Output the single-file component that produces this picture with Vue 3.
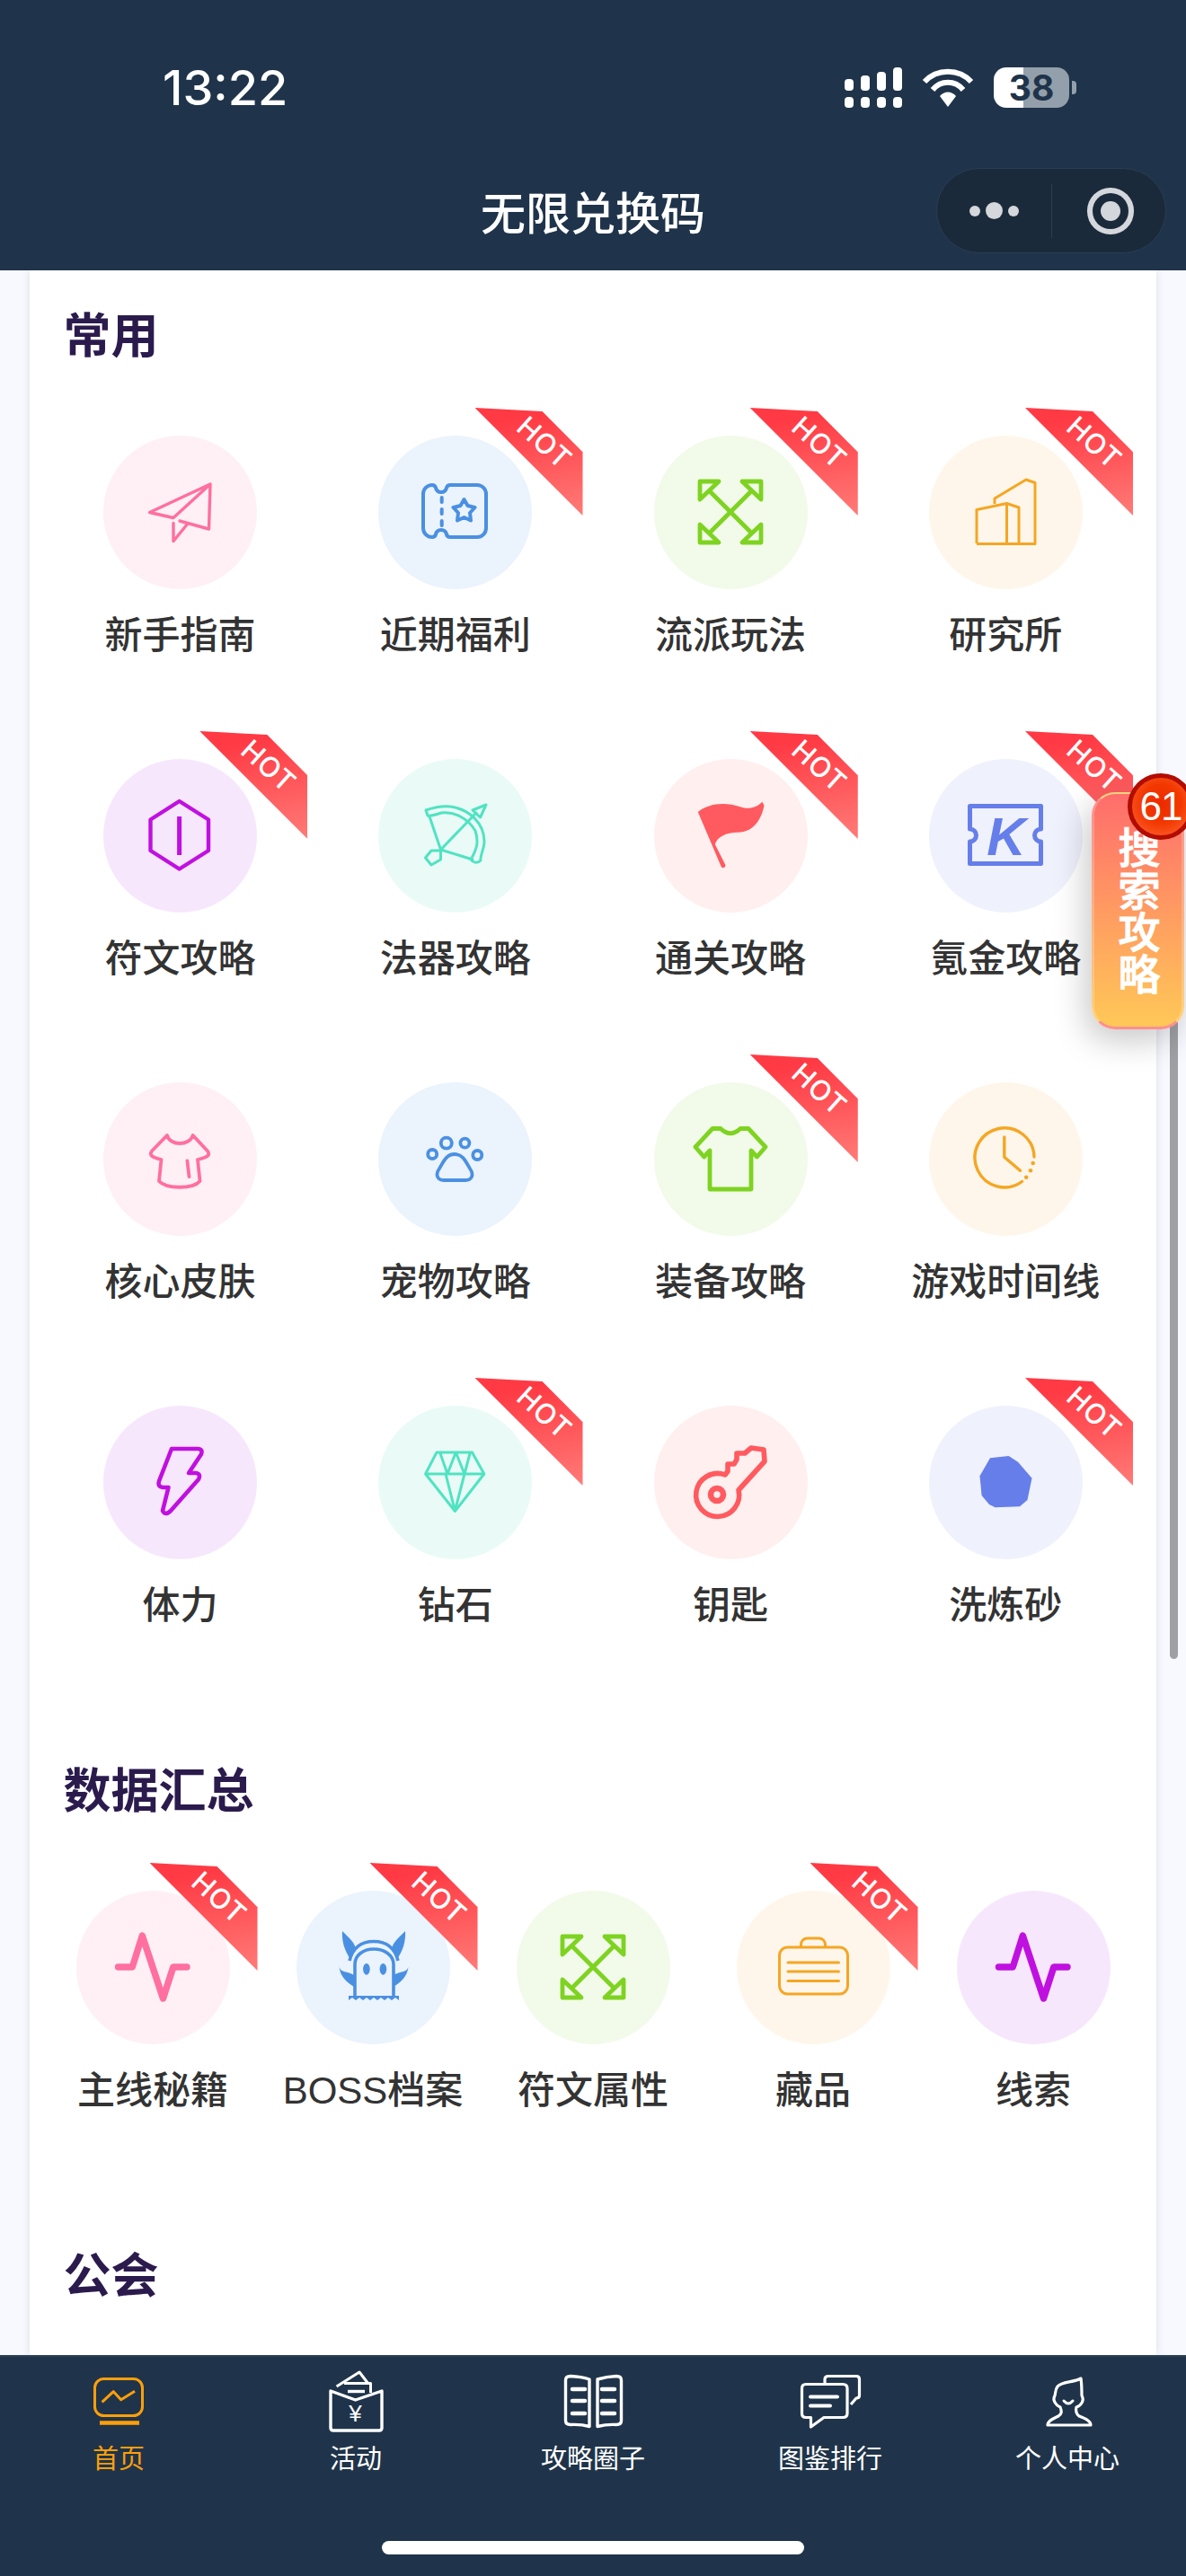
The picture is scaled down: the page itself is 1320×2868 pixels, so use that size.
<script setup>
const icons = {
  plane: '<path stroke-width="3.4" stroke-linejoin="round" stroke-linecap="round" d="M119 54 51.500 85.500 78 91.500ZM119 54 117.500 104 85 95M78 97.500V117.500L93.500 98.500"/>',
  ticket: '<path stroke-width="4" d="M60 55q3 0 4 3q1 5 6 5t6-5q1-3 4-3h30a10 10 0 0 1 10 10v38a10 10 0 0 1-10 10h-30q-3 0-4-3q-1-5-6-5t-6 5q-1 3-4 3a10 10 0 0 1-10-10v-38a10 10 0 0 1 10-10z"/><path stroke-width="4" stroke-linecap="round" d="M70.700 69v5M70.700 82v5M70.700 95v5"/><path stroke-width="4" stroke-linejoin="round" d="M95.500 71 99.500 78 107.500 80 102 86 103 94.500 95.500 91 88 94.500 89 86 83.500 80 91.500 78Z"/>',
  arrows: '<g stroke-width="4.800" stroke-linejoin="round" stroke-linecap="round"><path d="M51 51H72L51 71ZM119 51H98L119 71ZM51 119H72L51 99ZM119 119H98L119 99Z"/><path d="M62 62 108 108M108 62 62 108"/></g>',
  building: '<path stroke-width="3" stroke-linejoin="round" d="M53 120V82.500L86.500 75.500V120M86.500 75.500 100 80V120M73 76V70L108 49 118 52.500V120.500H53"/>',
  hexagon: '<path stroke-width="4.400" stroke-linejoin="round" d="M84.600 47 117 67.500V102L84.600 122.500 52.500 102V67.500Z"/><path stroke-width="5" d="M84.600 64V107"/>',
  bow: '<g stroke-width="3" stroke-linejoin="round" stroke-linecap="round"><path d="M53 57C62 54 70 52 80 53C102 56 118 72 118 92C118 100 113 108 114 113C110 117 105 115 103 112C110 100 112 92 108 80C100 66 84 58 70 60C64 62 58 64 55 63Z"/><path d="M57 64 69.500 101 105 112M69.500 101 109 60"/><path d="M120 51 105 57 113.500 65ZM59 102 52.500 110 59 118 69.500 112V102Z"/></g>',
  flag: '<path fill="currentColor" stroke="none" d="M48.800 59C59 50 78 47 95 53C105 57 114 54 120.400 47.700L122.500 51.700C120 65 112 81.700 93 81.700C80 81.700 70 87 67.800 95L79.500 118.300C79 122 75 122.500 74 118.300Z"/>',
  kticket: '<path stroke-width="5" stroke-linejoin="round" d="M45.500 52.500H124.500V78A7 7 0 0 0 124.500 92V116.500H45.500V92A7 7 0 0 0 45.500 78Z"/><text x="86" y="107" text-anchor="middle" font-family="Liberation Sans" font-size="60" font-weight="700" font-style="italic" fill="currentColor" stroke="none">K</text>',
  blouse: '<path stroke-width="3.800" stroke-linejoin="round" stroke-linecap="round" d="M71 59C74 71 96 71 99.700 59L116 76.500C119 81 117 83 105 86L107.500 110C100 119 70 119 62 110L64.500 86C53 83 51 81 54 76.500ZM93.400 87.500 95.500 105"/>',
  paw: '<g stroke-width="3.800"><circle cx="75.800" cy="67.700" r="6"/><circle cx="96.400" cy="67.700" r="5"/><circle cx="60.200" cy="80" r="5"/><circle cx="110.300" cy="81" r="5"/><path d="M85 80C75 80 72 90 68 96C63 103 66 109 73 109H97C104 109 107 103 102 96C98 90 95 80 85 80Z"/></g>',
  tee: '<path stroke-width="4.800" stroke-linejoin="round" d="M74 51.500Q85 62 96 51.500H105L124 72 114.500 83 108 76V119H62V76L55.500 83 46 72 65 51.500Z"/>',
  clock: '<g stroke-width="3.400" stroke-linecap="round" stroke-linejoin="round"><path d="M103.500 110.500A33 33 0 1 1 117 83"/><path d="M83.800 61V83.300L101.400 98.300"/></g><g fill="currentColor" stroke="none"><circle cx="115.700" cy="90" r="2.300"/><circle cx="113" cy="98.300" r="2.300"/><circle cx="108.200" cy="105.700" r="2.300"/></g>',
  bolt: '<path stroke-width="4.600" stroke-linejoin="round" d="M76 48H105Q111 48 109 54L95 75H103Q109 76 106 82L75 117Q69 123 66 117L72.500 91H66Q60 90 62 84Z"/>',
  diamond: '<path stroke-width="3" stroke-linejoin="round" d="M65 52H104.500L117.800 76 85.400 117.500 52.600 76ZM52.600 76H117.800M68.600 52 77 76 86.300 52 96 76 102.300 52M75 76 85.400 117 96 76"/>',
  key: '<path stroke-width="5.600" stroke-linejoin="round" d="M79 77 82 73V65H89L92 60V53H101L108 47 122 49 123 62 94 94A24 24 0 1 1 79 77Z"/><circle cx="70" cy="99" r="7" stroke-width="6.600"/>',
  rock: '<path fill="currentColor" stroke="none" d="M68 58.300 88.700 56 99 62.700 114.500 80.700 109.500 105 101 112.300 73.600 113.300 67 110 58.600 100 56.500 78.300Z"/>',
  pulse: '<path stroke-width="7.400" stroke-linejoin="round" stroke-linecap="round" d="M46.500 85H62.300L73.300 50 96.500 120 107.800 85H123"/>',
  monster: '<g fill="currentColor" stroke="none"><path d="M51 45C58 52 64 57 66 64L60 76C54 68 50 56 51 45ZM121 45C114 52 108 57 106 64L112 76C118 68 122 56 121 45ZM47.500 85C50 92 56 89 64 94V107C56 102 49 96 47.500 85ZM124.500 85C122 92 116 89 108 94V107C116 102 123 96 124.500 85Z"/><path d="M58 117H114V122L110 119 106 122 102 119 98 122 94 119 90 122 86 119 82 122 78 119 74 122 70 119 66 122 62 119 58 122Z"/><ellipse cx="77.900" cy="87.300" rx="3.800" ry="6.400"/><ellipse cx="96.400" cy="87.300" rx="3.800" ry="6.400"/></g><path stroke-width="3.600" d="M59 78C63 62 74 56.500 86 56.500C98 56.500 109 62 113 78M65 119V82C65 72 74 65 86 65C98 65 108 72 108 82V119"/>',
  suitcase: '<g stroke-width="3" stroke-linecap="round"><rect x="47.500" y="63" width="76" height="52" rx="9"/><path d="M71.500 62V60A7 7 0 0 1 78.500 53H91.500A7 7 0 0 1 98.500 60V62M57 80H113.500M57 90H113.500M57 100.500H113.500"/></g>'
}

const tabIcons = {
  home: '<g transform="translate(8 9)"><rect x="1.500" y="1.500" width="53" height="41" rx="10" stroke-width="3"/><path stroke-width="3" stroke-linejoin="round" d="M9.600 27.300 22.300 15.700 30.700 24.700 46 15.300"/><path stroke-width="4.500" d="M7 50.500H51"/></g>',
  gift: '<g transform="translate(6 2)" stroke-linejoin="round"><path stroke-width="3" d="M8.600 17 34 1 44 14M17 13.500H46.500V24"/><path stroke-width="3.400" d="M2 22V63Q2 66 5 66H56Q59 66 59 63V22L29.600 32Z"/><path stroke-width="3.400" d="M21 22.500H40"/><text x="29.600" y="56" text-anchor="middle" font-family="Liberation Sans" font-size="26" fill="currentColor" stroke="none">¥</text></g>',
  book: '<g transform="translate(3 5)"><path stroke-width="3.400" stroke-linejoin="round" d="M8 2.500Q20 3 29 6V58.500Q20 56 8 56.500Q2.500 56.500 2.500 52V7Q2.500 2.500 8 2.500ZM59 2.500Q48 3 38 6V58.500Q48 56 59 56.500Q64.500 56.500 64.500 52V7Q64.500 2.500 59 2.500Z"/><path stroke-width="4.500" stroke-linecap="round" d="M10 17H24M10 30H24M10 44H24M43 17H57M43 30H57M43 44H57"/></g>',
  chat: '<g transform="translate(3 6)" stroke-linejoin="round"><path stroke-width="3.200" d="M27 9V5Q27 1.500 31 1.500H62Q65.500 1.500 65.500 5V23Q65.500 26 62 26L56 33"/><path stroke-width="3.200" d="M6 10.500H47Q52 10.500 52 15V43Q52 47.500 47 47.500H26L11.500 58V47.500H6Q1.500 47.500 1.500 43V15Q1.500 10.500 6 10.500Z"/><path stroke-width="4" stroke-linecap="round" d="M11 24.500H41M11 34.500H33"/></g>',
  person: '<g transform="translate(12 9)" stroke-linejoin="round"><path stroke-width="3.200" d="M39 1C30 6 18 4 13 10C10 14 11 18 10 20C7 25 11 31 16 33C18 38 18 40 14 43C8 46 2 48 2 53H50C50 48 44 46 37 43C33 40 33 37 34 33C40 31 43 25 40 20C40 15 40 8 39 1Z"/><path stroke-width="3" stroke-linecap="round" d="M20 26Q25 32 30 26"/></g>'
}

const commonItems = [
  { name: '新手指南', tone: 'pink', icon: 'plane' },
  { name: '近期福利', tone: 'blue', icon: 'ticket', hot: true },
  { name: '流派玩法', tone: 'green', icon: 'arrows', hot: true },
  { name: '研究所', tone: 'orange', icon: 'building', hot: true },
  { name: '符文攻略', tone: 'purple', icon: 'hexagon', hot: true },
  { name: '法器攻略', tone: 'teal', icon: 'bow' },
  { name: '通关攻略', tone: 'red', icon: 'flag', hot: true },
  { name: '氪金攻略', tone: 'indigo', icon: 'kticket', hot: true },
  { name: '核心皮肤', tone: 'pink', icon: 'blouse' },
  { name: '宠物攻略', tone: 'blue', icon: 'paw' },
  { name: '装备攻略', tone: 'green', icon: 'tee', hot: true },
  { name: '游戏时间线', tone: 'orange', icon: 'clock' },
  { name: '体力', tone: 'purple', icon: 'bolt' },
  { name: '钻石', tone: 'teal', icon: 'diamond', hot: true },
  { name: '钥匙', tone: 'red', icon: 'key' },
  { name: '洗炼砂', tone: 'indigo', icon: 'rock', hot: true }
]

const dataItems = [
  { name: '主线秘籍', tone: 'pink', icon: 'pulse', hot: true },
  { name: 'BOSS档案', tone: 'blue', icon: 'monster', hot: true },
  { name: '符文属性', tone: 'green', icon: 'arrows' },
  { name: '藏品', tone: 'orange', icon: 'suitcase', hot: true },
  { name: '线索', tone: 'purple', icon: 'pulse' }
]

const sections = [
  { title: '常用', items: commonItems, cols: 'four' },
  { title: '数据汇总', items: dataItems, cols: 'five' },
  { title: '公会', items: [], cols: 'four' }
]

const tabs = [
  { name: '首页', icon: 'home', active: true },
  { name: '活动', icon: 'gift' },
  { name: '攻略圈子', icon: 'book' },
  { name: '图鉴排行', icon: 'chat' },
  { name: '个人中心', icon: 'person' }
]

const signalBars = [13, 17, 21, 26]
</script>

<template>
  <div class="page">
    <header class="top">
      <div class="status">
        <span class="time">13:22</span>
        <div class="status-icons">
          <div class="signal">
            <div v-for="h in signalBars" :key="h" class="signal-col">
              <i :style="{ height: h + 'px' }"></i>
              <i class="low"></i>
            </div>
          </div>
          <svg class="wifi" width="58" height="44" viewBox="0 0 58 44" fill="none" stroke="#fff" stroke-width="6">
            <path d="M3 15C17 0 41 0 55 15" />
            <path d="M12 24C21 13 37 13 46 24" />
            <path d="M20 31C25 25 33 25 38 31L29 43Z" fill="#fff" stroke="none" />
          </svg>
          <div class="battery">
            <div class="battery-body"><span>38</span></div>
            <div class="battery-cap"></div>
          </div>
        </div>
      </div>
      <div class="nav">
        <span></span>
        <h1 class="nav-title">无限兑换码</h1>
        <div class="capsule">
          <div class="capsule-dots"><i></i><i class="big"></i><i></i></div>
          <div class="capsule-line"></div>
          <div class="capsule-target"><i></i></div>
        </div>
      </div>
    </header>

    <main class="main">
      <div class="card">
        <section v-for="sec in sections" :key="sec.title" class="section">
          <h2 class="section-title">{{ sec.title }}</h2>
          <div class="grid" :class="sec.cols">
            <div v-for="item in sec.items" :key="item.name" class="cell" :class="'tone-' + item.tone">
              <div v-if="item.hot" class="ribbon"><span>HOT</span></div>
              <div class="circle">
                <svg viewBox="0 0 171 171" width="171" height="171" v-html="icons[item.icon]"></svg>
              </div>
              <div class="label">{{ item.name }}</div>
            </div>
          </div>
        </section>
      </div>
    </main>

    <footer class="tabbar">
      <div class="tabs">
        <div v-for="tab in tabs" :key="tab.name" class="tab" :class="{ active: tab.active }">
          <svg viewBox="0 0 72 72" width="72" height="72" v-html="tabIcons[tab.icon]"></svg>
          <span>{{ tab.name }}</span>
        </div>
      </div>
      <div class="home-bar"></div>
    </footer>

    <div class="scrollbar"></div>
    <div class="search-btn">
      <span class="search-text">搜索攻略</span>
      <div class="search-badge">61</div>
    </div>
  </div>
</template>

<style>
html,
body {
  margin: 0;
  padding: 0;
}
</style>

<style scoped>
.page {
  position: relative;
  width: 1320px;
  height: 2868px;
  display: flex;
  flex-direction: column;
  overflow: hidden;
  background: #f8f9fe;
  font-family: "Liberation Sans", "Noto Sans CJK SC", sans-serif;
}

.top {
  height: 301px;
  flex: none;
  background: #1f344a;
  color: #fff;
}

.status {
  height: 187px;
  box-sizing: border-box;
  padding: 8px 122px 0 181px;
  display: flex;
  align-items: center;
  justify-content: space-between;
}

.time {
  font-family: Inter, sans-serif;
  font-size: 54px;
  font-weight: 500;
}

.status-icons {
  display: flex;
  align-items: center;
  gap: 22px;
}

.signal {
  display: flex;
  gap: 8px;
  height: 45px;
  align-items: flex-end;
}

.signal-col {
  display: flex;
  flex-direction: column;
  gap: 7px;
  width: 10px;
}

.signal-col i {
  display: block;
  background: #fff;
  border-radius: 4px;
}

.signal-col i.low {
  height: 12px;
}

.battery {
  display: flex;
  align-items: center;
  gap: 3px;
}

.battery-body {
  position: relative;
  width: 84px;
  height: 45px;
  border-radius: 14px;
  background: linear-gradient(90deg, #fff 0 39%, #93a0ab 39% 100%);
  display: flex;
  align-items: center;
  justify-content: center;
}

.battery-body span {
  font-family: Inter, sans-serif;
  font-size: 39px;
  font-weight: 700;
  color: #1f344a;
}

.battery-cap {
  width: 5px;
  height: 15px;
  border-radius: 0 4px 4px 0;
  background: #93a0ab;
}

.nav {
  height: 114px;
  display: grid;
  grid-template-columns: 1fr auto 1fr;
  align-items: start;
}

.nav-title {
  margin: 0;
  font-family: "Noto Sans CJK SC", sans-serif;
  font-size: 50px;
  font-weight: 500;
  line-height: 94px;
}

.capsule {
  justify-self: end;
  margin-right: 22px;
  width: 256px;
  height: 95px;
  box-sizing: border-box;
  border-radius: 48px;
  border: 1px solid #2a3d52;
  background: #1b2a3a;
  display: flex;
  align-items: center;
}

.capsule-dots {
  width: 127px;
  display: flex;
  align-items: center;
  justify-content: center;
  gap: 6px;
}

.capsule-dots i {
  width: 12px;
  height: 12px;
  border-radius: 50%;
  background: #d4d7dc;
}

.capsule-dots i.big {
  width: 19px;
  height: 19px;
}

.capsule-line {
  width: 1px;
  height: 60px;
  background: #2a3d52;
}

.capsule-target {
  flex: 1;
  display: flex;
  align-items: center;
  justify-content: center;
  padding-left: 3px;
}

.capsule-target i {
  width: 22px;
  height: 22px;
  border-radius: 50%;
  background: #d4d7dc;
  box-shadow: 0 0 0 9px #1b2a3a, 0 0 0 15px #d4d7dc;
}

.main {
  flex: 1;
  min-height: 0;
  overflow: hidden;
}

.card {
  margin: 0 33px;
  min-height: 100%;
  box-sizing: border-box;
  padding: 33px 14.5px 0;
  background: #fff;
  box-shadow: 0 0 8px rgba(40, 50, 110, 0.14);
}

.section-title {
  margin: 0 0 48px 23px;
  height: 72px;
  font-family: "Noto Sans CJK SC", sans-serif;
  font-size: 53px;
  line-height: 72px;
  font-weight: 700;
  color: #2b1b4d;
}

.grid {
  display: grid;
  grid-auto-rows: 360px;
  margin-bottom: 60px;
}

.grid.four {
  grid-template-columns: repeat(4, 1fr);
}

.grid.five {
  grid-template-columns: repeat(5, 1fr);
}

.cell {
  position: relative;
  display: flex;
  flex-direction: column;
  align-items: center;
  padding-top: 31px;
  box-sizing: border-box;
}

.circle {
  width: 171px;
  height: 171px;
  border-radius: 50%;
}

.circle svg {
  display: block;
  fill: none;
  stroke: currentColor;
}

.label {
  margin-top: 24px;
  font-size: 42px;
  font-weight: 500;
  line-height: 56px;
  color: #333;
  white-space: nowrap;
}

.tone-pink .circle { background: #fef0f5; color: #ff6f9f; }
.tone-blue .circle { background: #ebf3fd; color: #4a90e2; }
.tone-green .circle { background: #f2faea; color: #7ed321; }
.tone-orange .circle { background: #fef6ea; color: #f5a623; }
.tone-purple .circle { background: #f7e7fc; color: #c010e0; }
.tone-teal .circle { background: #eafbf7; color: #50e3c2; }
.tone-red .circle { background: #ffefef; color: #ff5a5f; }
.tone-indigo .circle { background: #eff1fc; color: #667eea; }

.ribbon {
  position: absolute;
  top: 0;
  right: 11.5px;
  width: 120px;
  height: 120px;
  background: linear-gradient(170deg, #ff3a44 15%, #ff7b77 100%);
  clip-path: polygon(0 0, 62.5% 3.4%, 100% 41%, 100% 100%);
}

.grid.five .ribbon {
  right: 6px;
}

.ribbon span {
  position: absolute;
  left: 77px;
  top: 39px;
  transform: translate(-50%, -50%) rotate(42deg);
  font-family: Inter, sans-serif;
  font-size: 31px;
  font-weight: 500;
  line-height: 36px;
  letter-spacing: 1px;
  color: #fff;
}

.tabbar {
  height: 246px;
  flex: none;
  box-sizing: border-box;
  background: #1f344a;
  border-top: 2px solid #2d4054;
  color: #fff;
}

.tabs {
  display: flex;
  padding-top: 14px;
}

.tab {
  flex: 1;
  display: flex;
  flex-direction: column;
  align-items: center;
  gap: 5px;
  font-family: "Noto Sans CJK SC", sans-serif;
  font-size: 29px;
  line-height: 40px;
}

.tab svg {
  display: block;
  fill: none;
  stroke: currentColor;
}

.tab.active {
  color: #ff9f0a;
}

.home-bar {
  width: 470px;
  height: 15px;
  margin: 74px auto 0;
  border-radius: 8px;
  background: #fff;
}

.scrollbar {
  position: absolute;
  left: 1302px;
  top: 1100px;
  width: 9px;
  height: 747px;
  border-radius: 5px;
  background: #a0a0a4;
}

.search-btn {
  position: absolute;
  left: 1215px;
  top: 882px;
  width: 103px;
  height: 264px;
  box-sizing: border-box;
  border-radius: 26px;
  border-top: 2px solid #ffd27f;
  border-bottom: 3px solid #ff8f8f;
  border-left: 3px solid rgba(255, 255, 255, 0.22);
  border-right: 3px solid rgba(255, 255, 255, 0.22);
  background: linear-gradient(180deg, #ff6c6c 0%, #ffc957 100%);
  background-origin: border-box;
  box-shadow: -6px 12px 36px rgba(0, 0, 0, 0.22);
  display: flex;
  justify-content: center;
  padding: 36px 0 0 3px;
}

.search-text {
  writing-mode: vertical-rl;
  font-family: "Noto Sans CJK SC", sans-serif;
  font-size: 47px;
  line-height: 47px;
  font-weight: 500;
  -webkit-text-stroke: 1px #fff;
  color: #fff;
}

.search-badge {
  position: absolute;
  left: 37px;
  top: -23px;
  width: 74px;
  height: 74px;
  box-sizing: border-box;
  border-radius: 50%;
  border: 5px solid #b30c00;
  background: radial-gradient(circle at 50% 45%, #ec2a00 0%, #f23800 45%, #ff6a3a 100%);
  display: flex;
  align-items: center;
  justify-content: center;
  font-size: 44px;
  letter-spacing: -1px;
  color: #fff;
}
</style>
